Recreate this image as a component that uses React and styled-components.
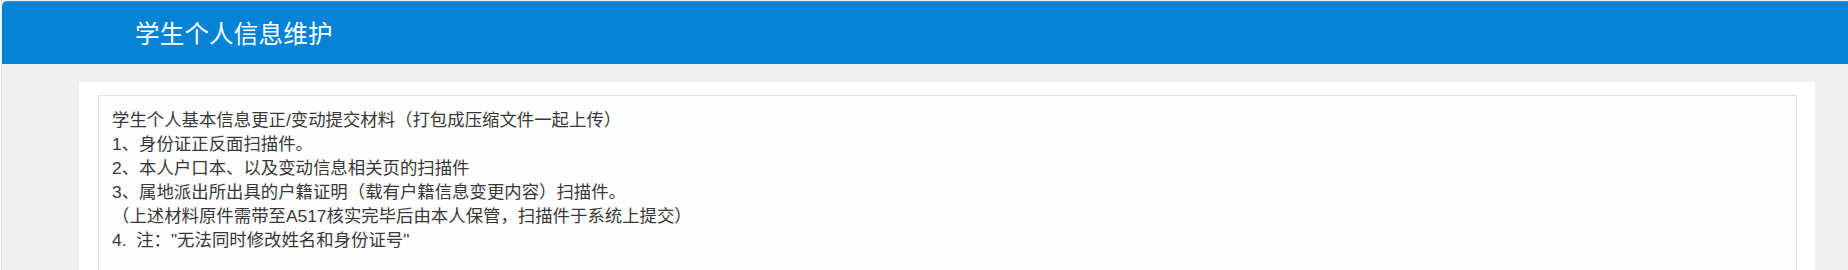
import React from "react";
import styled, { createGlobalStyle } from "styled-components";

const Global = createGlobalStyle`
  html, body { margin: 0; padding: 0; background: #ffffff; overflow: hidden; }
  body { font-family: "Noto Sans CJK SC", "Liberation Sans", sans-serif; }
`;

const Frame = styled.div`
  margin-left: 1px;
  border-left: 1px solid #e4e4e4;
  background: #f0f0f0;
  height: 270px;
  overflow: hidden;
  display: flex;
  flex-direction: column;
`;

const Header = styled.header`
  flex-shrink: 0;
  margin-top: 1px;
  height: 63px;
  background: #0683d4;
  border-top: 1px solid #2f96da;
  box-sizing: border-box;
  border-top-left-radius: 5px;
  display: flex;
  align-items: center;
  padding-left: 133px;
`;

const Title = styled.h1`
  margin: 0;
  color: #ffffff;
  font-size: 24.5px;
  font-weight: 400;
  letter-spacing: 0.2px;
  font-family: "Noto Sans CJK SC", "Liberation Sans", sans-serif;
  line-height: 1;
`;

const Main = styled.main`
  flex: 1 0 auto;
  padding: 18px 33px 0 77px;
  display: flex;
`;

const Panel = styled.section`
  flex: 1;
  background: #ffffff;
  padding: 13px 18px 0 19px;
  display: flex;
`;

const Notice = styled.div`
  flex: 1;
  border: 1px solid #dedede;
  border-bottom: none;
  background: #fefefe;
  padding: 12px 13px;
  min-height: 200px;
`;

const Line = styled.p`
  margin: 0;
  font-size: 17.4px;
  line-height: 24px;
  color: #383838;
  font-family: "Liberation Sans", "Noto Sans CJK SC", sans-serif;
  white-space: pre;
`;

const lines = [
  "学生个人基本信息更正/变动提交材料（打包成压缩文件一起上传）",
  "1、身份证正反面扫描件。",
  "2、本人户口本、以及变动信息相关页的扫描件",
  "3、属地派出所出具的户籍证明（载有户籍信息变更内容）扫描件。",
  "（上述材料原件需带至A517核实完毕后由本人保管，扫描件于系统上提交）",
  "4.  注：\"无法同时修改姓名和身份证号\"",
];

export default function App() {
  return (
    <>
      <Global />
      <Frame>
        <Header>
          <Title>学生个人信息维护</Title>
        </Header>
        <Main>
          <Panel>
            <Notice>
              {lines.map((t, i) => (
                <Line key={i}>{t}</Line>
              ))}
            </Notice>
          </Panel>
        </Main>
      </Frame>
    </>
  );
}
